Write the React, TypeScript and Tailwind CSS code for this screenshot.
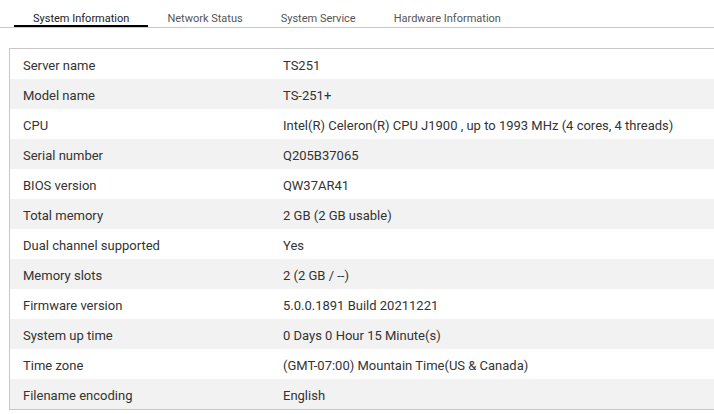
const tabs = ["System Information", "Network Status", "System Service", "Hardware Information"];

const rows: [string, string][] = [
  ["Server name", "TS251"],
  ["Model name", "TS-251+"],
  ["CPU", "Intel(R) Celeron(R) CPU J1900 , up to 1993 MHz (4 cores, 4 threads)"],
  ["Serial number", "Q205B37065"],
  ["BIOS version", "QW37AR41"],
  ["Total memory", "2 GB (2 GB usable)"],
  ["Dual channel supported", "Yes"],
  ["Memory slots", "2 (2 GB / --)"],
  ["Firmware version", "5.0.0.1891 Build 20211221"],
  ["System up time", "0 Days 0 Hour 15 Minute(s)"],
  ["Time zone", "(GMT-07:00) Mountain Time(US & Canada)"],
  ["Filename encoding", "English"],
];

export default function App() {
  return (
    <div className="w-[714px] h-[414px] overflow-hidden bg-white text-[#333]" style={{ fontFamily: "Roboto, 'Liberation Sans', sans-serif" }}>
      <div className="flex pl-[14px] pt-[10px] border-b border-[#c8c8c8]">
        {tabs.map((t, i) => (
          <div
            key={t}
            className={
              "px-[19px] h-[17px] text-[11px] leading-[17px] " +
              (i === 0 ? "border-b-2 border-black text-[#222] mb-[-1px]" : "text-[#555]")
            }
          >
            {t}
          </div>
        ))}
      </div>
      <div className="ml-[9px] mt-[20px] w-[720px] border border-[#c8c8c8]">
        {rows.map(([k, v], i) => (
          <div key={k} className={"flex h-[30px] pt-[3px] items-center text-[13px] " + (i % 2 === 1 ? "bg-[#f2f2f2]" : "bg-white")}>
            <div className="w-[273px] pl-[13px]">{k}</div>
            <div>{v}</div>
          </div>
        ))}
      </div>
    </div>
  );
}
